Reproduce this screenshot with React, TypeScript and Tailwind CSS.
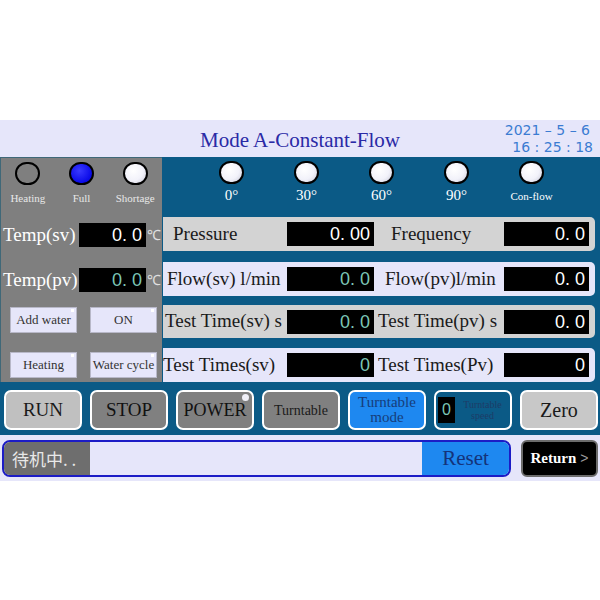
import React from "react";

const serif = "font-['Liberation_Serif','Times_New_Roman',serif]";
const sans = "font-['Liberation_Sans',Arial,sans-serif]";

function Lamp({ kind }: { kind: "off" | "on" | "white" }) {
  const cls =
    kind === "off"
      ? "bg-transparent"
      : kind === "on"
      ? "bg-[radial-gradient(circle_at_40%_35%,#3a3aff,#0a0ae8_70%,#0000c0)]"
      : "bg-[radial-gradient(circle_at_40%_35%,#ffffff,#f2f2fa_55%,#c8c8d8)]";
  return <div className={`w-[25px] h-[23px] rounded-full border-2 border-black ${cls}`} />;
}

function ValBox({ v, teal, w }: { v: string; teal?: boolean; w: string }) {
  return (
    <div
      className={`${w} shrink-0 h-[24px] bg-black flex items-center justify-end pr-[4px] ${sans} text-[18px] leading-none ${
        teal ? "text-[#7cc6b6]" : "text-white"
      }`}
    >
      {v}
    </div>
  );
}

function PanelBtn({ label }: { label: string }) {
  return (
    <div
      className={`relative w-[67px] h-[26px] bg-[#e6e6fa] border border-[#b8b8c8] flex items-center justify-center ${serif} text-[13px] text-[#333] whitespace-nowrap`}
    >
      {label}
      <div className="absolute top-[1px] right-[2px] w-[3px] h-[3px] bg-white" />
    </div>
  );
}

function Row({
  gray,
  l1,
  v1,
  t1,
  l2,
  v2,
  l1cls,
  l2cls,
}: {
  gray: boolean;
  l1: string;
  v1: string;
  t1?: boolean;
  l2: string;
  v2: string;
  l1cls: string;
  l2cls: string;
}) {
  return (
    <div
      className={`h-[34px] ml-[1px] mr-[5px] rounded-r-[5px] flex items-center ${
        gray ? "bg-[#d3d3d3]" : "bg-[#e6e6fa]"
      } ${serif} text-[19px] text-[#1a1a1a]`}
    >
      <div className={`w-[124px] min-w-0 shrink-0 whitespace-nowrap ${l1cls}`}>{l1}</div>
      <ValBox v={v1} teal={t1} w="w-[87px]" />
      <div className={`w-[130px] min-w-0 shrink-0 whitespace-nowrap ${l2cls}`}>{l2}</div>
      <ValBox v={v2} w="w-[85px]" />
    </div>
  );
}

function BigBtn({
  children,
  bg,
  cls = "",
}: {
  children: React.ReactNode;
  bg: string;
  cls?: string;
}) {
  return (
    <div
      className={`relative w-[78px] h-[40px] rounded-[7px] border-2 border-white flex items-center justify-center ${bg} ${serif} ${cls}`}
    >
      {children}
    </div>
  );
}

export default function App() {
  return (
    <div className="w-[600px] h-[600px] bg-white flex flex-col overflow-hidden">
      <div className="h-[120px]" />
      <div className="h-[361px] bg-[#e6e6fa] flex flex-col">
        {/* header */}
        <div className="relative h-[37px] flex items-center justify-center">
          <div className={`${serif} text-[21px] text-[#2a2aa6] leading-none mt-[4px]`}>
            Mode A-Constant-Flow
          </div>
          <div
            className={`absolute right-[7px] top-[2px] flex flex-col items-end font-['DejaVu_Sans',sans-serif] text-[14px] leading-[17px] text-[#3b7cd2]`}
          >
            <div className="mr-[3px]">2021 – 5 – 6</div>
            <div>16 : 25 : 18</div>
          </div>
        </div>

        {/* blue area */}
        <div className="h-[278px] bg-[#0b5a86] flex flex-col">
          <div className="flex h-[225px]">
            {/* left gray panel */}
            <div className="w-[162px] h-[225px] bg-[#7f7f7f] border-t border-l border-[#3f6878] flex flex-col">
              <div className="h-[60px] flex pt-[4px]">
                {[
                  ["off", "Heating"],
                  ["on", "Full"],
                  ["white", "Shortage"],
                ].map(([k, l]) => (
                  <div key={l} className="w-[55px] flex flex-col items-center">
                    <Lamp kind={k as "off" | "on" | "white"} />
                    <div className={`${serif} text-[11px] text-[#e8e8e8] mt-[8px] leading-none whitespace-nowrap`}>
                      {l}
                    </div>
                  </div>
                ))}
              </div>
              <div className="h-[34px] flex items-center">
                <div className={`w-[78px] min-w-0 shrink-0 pl-[2px] ${serif} text-[19px] text-white whitespace-nowrap`}>Temp(sv)</div>
                <ValBox v="0. 0" w="w-[67px]" />
                <div className={`ml-[1px] ${serif} text-[14px] text-[#e0e0e0]`}>℃</div>
              </div>
              <div className="h-[34px] mt-[11px] flex items-center">
                <div className={`w-[78px] min-w-0 shrink-0 pl-[2px] ${serif} text-[19px] text-white whitespace-nowrap`}>Temp(pv)</div>
                <ValBox v="0. 0" teal w="w-[67px]" />
                <div className={`ml-[1px] ${serif} text-[14px] text-[#e0e0e0]`}>℃</div>
              </div>
              <div className="flex mt-[10px] pl-[9px] gap-[13px]">
                <PanelBtn label="Add water" />
                <PanelBtn label="ON" />
              </div>
              <div className="flex mt-[19px] pl-[9px] gap-[13px]">
                <PanelBtn label="Heating" />
                <PanelBtn label="Water cycle" />
              </div>
            </div>

            {/* right column */}
            <div className="flex-1 flex flex-col">
              <div className="h-[61px] flex pl-[32px] pt-[4px]">
                {["0°", "30°", "60°", "90°", "Con-flow"].map((l) => (
                  <div key={l} className="w-[75px] flex flex-col items-center">
                    <Lamp kind="white" />
                    <div
                      className={`${serif} ${
                        l === "Con-flow" ? "text-[11px] mt-[7px]" : "text-[15px] mt-[4px]"
                      } text-white leading-none`}
                    >
                      {l}
                    </div>
                  </div>
                ))}
              </div>
              <Row gray l1="Pressure" l1cls="pl-[10px]" v1="0. 00" l2="Frequency" l2cls="pl-[17px]" v2="0. 0" />
              <div className="h-[11px]" />
              <Row gray={false} l1="Flow(sv) l/min" l1cls="pl-[4px]" v1="0. 0" t1 l2="Flow(pv)l/min" l2cls="pl-[11px]" v2="0. 0" />
              <div className="h-[9px]" />
              <Row gray l1="Test Time(sv) s" l1cls="pl-[2px]" v1="0. 0" t1 l2="Test Time(pv) s" l2cls="pl-[4px]" v2="0. 0" />
              <div className="h-[10px]" />
              <Row gray={false} l1="Test Times(sv)" l1cls="pl-[0px]" v1="0" t1 l2="Test Times(Pv)" l2cls="pl-[4px]" v2="0" />
            </div>
          </div>

          {/* button row */}
          <div className="flex gap-[8px] pl-[4px] mt-[8px]">
            <BigBtn bg="bg-[#c0c0c0]">
              <span className="text-[19px] text-[#1a1a1a]">RUN</span>
            </BigBtn>
            <BigBtn bg="bg-[#808080]">
              <span className="text-[19px] text-[#111]">STOP</span>
            </BigBtn>
            <BigBtn bg="bg-[#808080]">
              <span className="text-[18px] text-[#111]">POWER</span>
              <div className="absolute top-[2px] right-[3px] w-[7px] h-[7px] rounded-full bg-[#f0f0f8]" />
            </BigBtn>
            <BigBtn bg="bg-[#808080]">
              <span className="text-[14px] text-[#1a1a1a]">Turntable</span>
            </BigBtn>
            <BigBtn bg="bg-[#1e88f0]">
              <span className="text-[15px] leading-[15px] text-[#163d7a] text-center">
                Turntable
                <br />
                mode
              </span>
            </BigBtn>
            <BigBtn bg="bg-[#0b5a86]" cls="justify-start pl-[2px]">
              <div className={`w-[17px] h-[26px] bg-black flex items-center justify-center ${sans} text-[16px] text-[#7cc6b6]`}>
                0
              </div>
              <div className="flex-1 text-center text-[10px] leading-[11px] text-[#1d3c66]">
                Turntable
                <br />
                speed
              </div>
            </BigBtn>
            <BigBtn bg="bg-[#c8c8c8]">
              <span className="text-[20px] text-[#1a1a1a]">Zero</span>
            </BigBtn>
          </div>
        </div>

        {/* status row */}
        <div className="flex mt-[5px] pl-[2px] items-start">
          <div className="w-[509px] h-[37px] rounded-[8px] border-2 border-[#1c1cc6] overflow-hidden flex">
            <div className="w-[86px] bg-[#6e6e6e] flex items-center pl-[8px] font-['Noto_Sans_CJK_SC',sans-serif] text-[17px] text-[#e8e8e8]">
              待机中. .
            </div>
            <div className="flex-1 bg-[#e6e6fa]" />
            <div className={`w-[87px] bg-[#1e88f0] flex items-center justify-center ${serif} text-[21px] text-[#14337a]`}>
              Reset
            </div>
          </div>
          <div className="ml-[10px] w-[77px] h-[37px] rounded-[6px] bg-black border-2 border-[#6c6c6c] flex items-center justify-center gap-[4px]">
            <span className={`${serif} font-bold text-[15px] text-white`}>Return</span>
            <span className={`${sans} text-[14px] text-[#9a9a9a]`}>&gt;</span>
          </div>
        </div>
      </div>
    </div>
  );
}
